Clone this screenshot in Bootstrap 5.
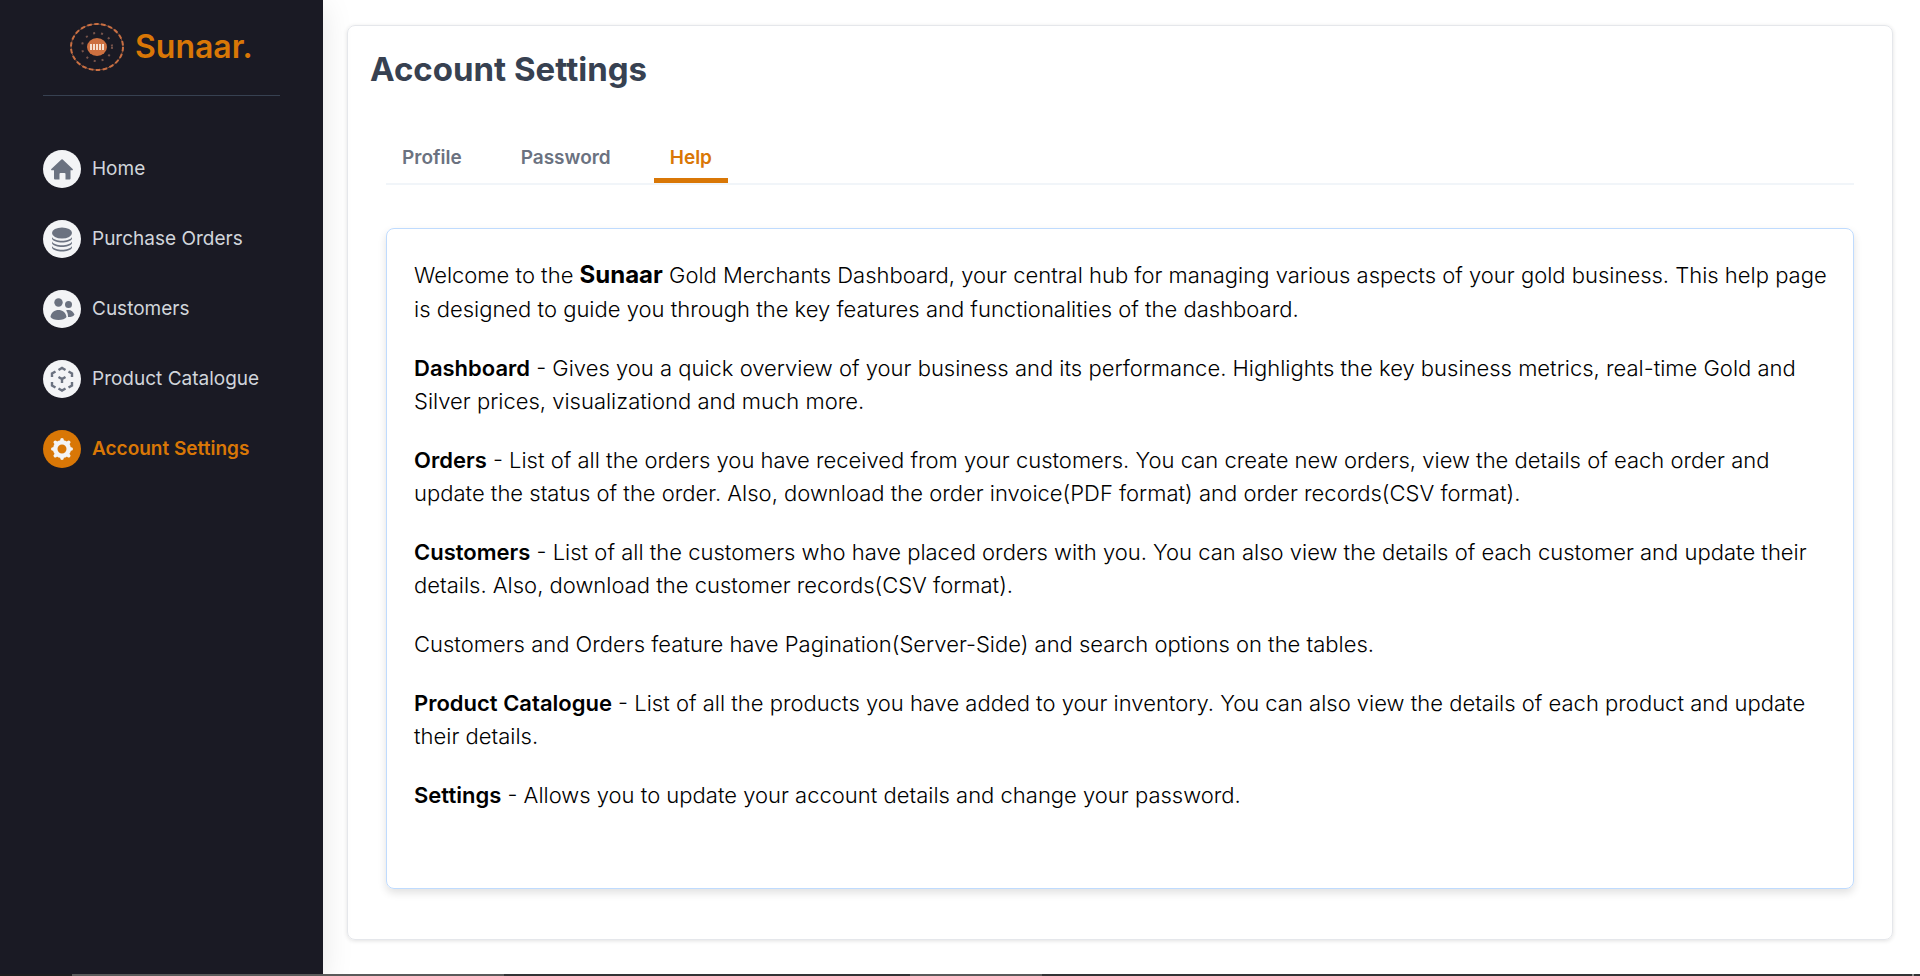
<!DOCTYPE html>
<html lang="en">
<head>
<meta charset="utf-8">
<meta name="viewport" content="width=device-width, initial-scale=1">
<title>Sunaar – Account Settings</title>
<link href="https://cdn.jsdelivr.net/npm/bootstrap@5.3.0/dist/css/bootstrap.min.css" rel="stylesheet">
<style>
body{font-family:Inter,"Liberation Sans",sans-serif;background:#fff;color:#000}
.shell{min-height:100vh}
.sidebar{width:323px;padding:22px 43px;background:#1a1a24;box-shadow:0 6px 30px rgba(0,0,0,.1)}
.brand{height:74px;padding-left:27px;gap:11px;border-bottom:1px solid #374151;color:#d97706;font-size:32px;font-weight:600;line-height:50px}
.brand:hover{color:#d97706}
.menu{gap:32px;margin-top:54px}
.menu a{gap:11px;color:#d1d5db;font-size:19px;line-height:38px}
.menu a.active{color:#d97706;font-weight:600}
.disc{width:38px;height:38px;background:#f3f4f6;color:#6b7280}
.active .disc{background:#d97706;color:#f3f4f6}
.content{padding:25px 27px 25px 24px}
.panel{border:1px solid #e5e7eb;border-radius:8px;box-shadow:0 1px 4px rgba(0,0,0,.12);padding:22px 38px 50px}
.panel h1{font-size:33px;font-weight:700;line-height:42px;color:#374151;margin:0 -16px 40px}
.tabs{gap:27px;border-bottom:2px solid #f1f5f9;margin-bottom:43px}
.tabs a{padding:11px 16px 3px;border-bottom:5px solid transparent;font-size:19px;line-height:34px;font-weight:600;color:#6b7280}
.tabs a.active{color:#d97706;border-color:#d97706}
.help{border:1px solid #bfdbfe;border-radius:8px;box-shadow:0 4px 8px rgba(0,0,0,.12);padding:27px 20px 50px 27px;font-size:22px;line-height:33px;font-weight:300}
.help p{margin-bottom:26px}
.help strong{font-weight:600}
.help strong.name{font-size:24px;font-weight:700;line-height:37px}
.edge{height:2px;background:linear-gradient(90deg,#1e1e20 3.75%,#5a5a5a 3.75% 26.25%,#333335 26.25% 47.4%,#5a5a5a 47.4% 54.27%,#333335 54.27% 99.6%,#8a8a8a 99.6% 99.7%,#333335 99.7%)}
</style>
</head>
<body>
<div class="shell d-flex">
<nav class="sidebar flex-shrink-0" aria-label="Main">
<a href="#" class="brand d-flex align-items-start text-decoration-none">
<svg width="54" height="50" viewBox="0 0 54 50" aria-hidden="true"><ellipse cx="27" cy="25" rx="26" ry="23" fill="none" stroke="#7a4a38" stroke-width="1"/><ellipse cx="27" cy="25" rx="26" ry="23" fill="none" stroke="#c96f42" stroke-width="2" stroke-dasharray="4.5 2.500"/><ellipse cx="27" cy="25" rx="15" ry="14" fill="none" stroke="#77544b" stroke-width="2" stroke-dasharray="2 6"/><ellipse cx="27" cy="25" rx="10" ry="9" fill="#cc7040"/><path d="M21 22v6M24 22v6M27 22v6M30 22v6M33 22v6" stroke="#f6dfce" stroke-width="2"/></svg>
<span>Sunaar.</span></a>
<div class="menu d-flex flex-column">
<a href="#" class="d-flex text-decoration-none"><span class="disc rounded-circle d-flex align-items-center justify-content-center"><svg width="24" height="24" viewBox="0 0 24 24" fill="currentColor"><path d="M11.4 2.5a1 1 0 0 1 1.3 0l10 9.400c.5.5.2 1.300-.5 1.300H20.500v8.300a1 1 0 0 1-1 1h-4v-5.500a1 1 0 0 0-1-1h-4a1 1 0 0 0-1 1v5.500H5a1 1 0 0 1-1-1v-8.300H1.800c-.700 0-1-.800-.500-1.300z"/></svg></span>Home</a>
<a href="#" class="d-flex text-decoration-none"><span class="disc rounded-circle d-flex align-items-center justify-content-center"><svg width="24" height="26" viewBox="0 0 24 26" fill="currentColor"><ellipse cx="12" cy="7" rx="10" ry="5.500"/><path id="coin" d="M2 11c2.500 5 17.500 5 20 0v1.800c-2.500 5-17.500 5-20 0z"/><use href="#coin" y="4.500"/><use href="#coin" y="9"/></svg></span>Purchase Orders</a>
<a href="#" class="d-flex text-decoration-none"><span class="disc rounded-circle d-flex align-items-center justify-content-center"><svg width="26" height="24" viewBox="0 0 26 24" fill="currentColor"><circle cx="9.500" cy="5.500" r="4.200"/><circle cx="19.500" cy="7.500" r="3.500"/><path d="M1.500 20c1-9.500 15-9.500 16 0-2 4-14 4-16 0zM17 13.500c4-1.500 7 .500 8.500 4-1 2-3 2.500-6.500 2.500 0-3-.5-5-2-6.500z"/></svg></span>Customers</a>
<a href="#" class="d-flex text-decoration-none"><span class="disc rounded-circle d-flex align-items-center justify-content-center"><svg width="24" height="26" viewBox="0 0 24 26" fill="none" stroke="currentColor" stroke-width="2.400"><path d="m8.500 4 3.500-2 3.500 2M18.500 5.500 22 7.500V11M22 16v3.500l-3.500 2M15.500 22.500 12 24.500l-3.500-2M5.500 21.500 2 19.500V16M2 11V7.500l3.500-2M8.500 11l3.500 2 3.500-2M12 13v4"/></svg></span>Product Catalogue</a>
<a href="#" class="active d-flex text-decoration-none" aria-current="page"><span class="disc rounded-circle d-flex align-items-center justify-content-center"><svg width="24" height="24" viewBox="0 0 24 24" fill="none" stroke="currentColor" stroke-linecap="round"><circle cx="12" cy="12" r="6.800" stroke-width="4.600"/><path stroke-width="3.600" d="M12 2.800v1M12 20.200v1M2.800 12h1M20.200 12h1M5.300 5.300l1 1M17.700 17.700l1 1M5.300 18.700l1-1M17.700 6.300l1-1"/></svg></span>Account Settings</a>
</div>
</nav>
<main class="content flex-grow-1">
<section class="panel">
<h1>Account Settings</h1>
<nav class="tabs d-flex" aria-label="Settings"><a href="#" class="text-decoration-none">Profile</a><a href="#" class="text-decoration-none">Password</a><a href="#" class="active text-decoration-none">Help</a></nav>
<article class="help">
<p>Welcome to the <strong class="name">Sunaar</strong> Gold Merchants Dashboard, your central hub for managing various aspects of your gold business. This help page is designed to guide you through the key features and functionalities of the dashboard.</p>
<p><strong>Dashboard</strong> - Gives you a quick overview of your business and its performance. Highlights the key business metrics, real-time Gold and Silver prices, visualizationd and much more.</p>
<p><strong>Orders</strong> - List of all the orders you have received from your customers. You can create new orders, view the details of each order and update the status of the order. Also, download the order invoice(PDF format) and order records(CSV format).</p>
<p><strong>Customers</strong> - List of all the customers who have placed orders with you. You can also view the details of each customer and update their details. Also, download the customer records(CSV format).</p>
<p>Customers and Orders feature have Pagination(Server-Side) and search options on the tables.</p>
<p><strong>Product Catalogue</strong> - List of all the products you have added to your inventory. You can also view the details of each product and update their details.</p>
<p><strong>Settings</strong> - Allows you to update your account details and change your password.</p>
</article>
</section>
</main>
</div>
<div class="edge fixed-bottom" aria-hidden="true"></div>
<script src="https://cdn.jsdelivr.net/npm/bootstrap@5.3.0/dist/js/bootstrap.bundle.min.js"></script>
</body>
</html>
